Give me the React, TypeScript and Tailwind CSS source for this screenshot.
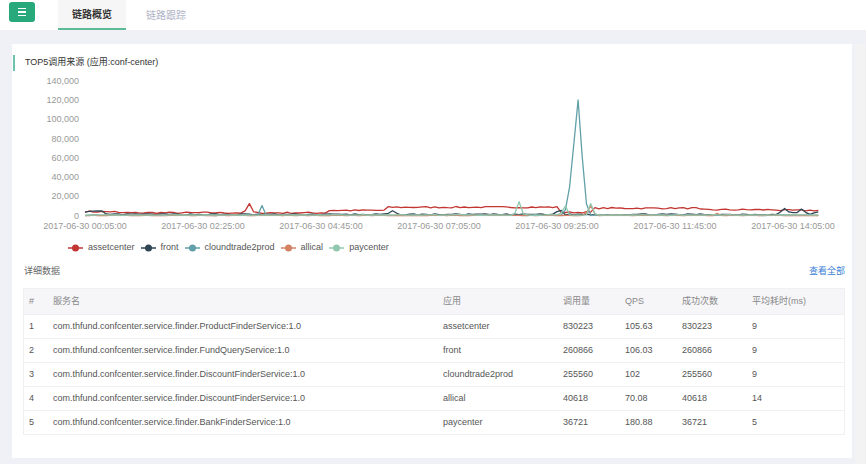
import React from 'react'

const N = 175
const X0 = 85
const STEP = 118 / 28
const px = (i: number) => X0 + i * STEP
const py = (v: number) => 215.7 - (v * 135) / 140000

function rng(seed: number) {
  let s = seed
  return () => {
    s = (s * 16807) % 2147483647
    return (s - 1) / 2147483646
  }
}

function build(seed: number, base: (i: number) => number, amp: number, spikes: Record<number, number>) {
  const r = rng(seed)
  const out: number[] = []
  for (let i = 0; i < N; i++) {
    let v = base(i) + (r() - 0.5) * amp
    if (spikes[i] !== undefined) v = spikes[i]
    out.push(Math.max(0, v))
  }
  return out
}

const series = [
  {
    name: 'assetcenter',
    color: '#c23531',
    data: build(
      7,
      (i) =>
        i < 8 ? 4200 : i < 58 ? 3000 : i < 72 ? 5500 : i < 113 ? 8800 : i < 121 ? 3500 : i < 146 ? 7800 : i < 165 ? 6200 : 5500,
      1500,
      { 38: 5000, 39: 12500, 40: 4000 }
    ),
  },
  {
    name: 'front',
    color: '#2f4554',
    data: build(
      13,
      (i) => (i < 5 ? 4300 : i > 164 ? 3500 : 1300),
      1400,
      { 72: 2500, 73: 5200, 74: 2500, 112: 4200, 113: 5500, 166: 7500, 170: 6800, 172: 1500 }
    ),
  },
  {
    name: 'cloundtrade2prod',
    color: '#61a0a8',
    data: build(21, () => 500, 500, {
      41: 500,
      42: 10500,
      43: 500,
      114: 6000,
      115: 30000,
      116: 75000,
      117: 120000,
      118: 60000,
      119: 12000,
    }),
  },
  {
    name: 'allical',
    color: '#d48265',
    data: build(33, () => 300, 400, { 119: 3000, 120: 10500, 121: 2000, 150: 2500 }),
  },
  {
    name: 'paycenter',
    color: '#91c7ae',
    data: build(45, () => 700, 600, { 102: 2500, 103: 14500, 104: 2000, 113: 3000, 114: 10000, 120: 12500, 121: 2000 }),
  },
]

const yTicks = [0, 20000, 40000, 60000, 80000, 100000, 120000, 140000]
const xLabels = [
  '2017-06-30 00:05:00',
  '2017-06-30 02:25:00',
  '2017-06-30 04:45:00',
  '2017-06-30 07:05:00',
  '2017-06-30 09:25:00',
  '2017-06-30 11:45:00',
  '2017-06-30 14:05:00',
]

const rows = [
  ['1', 'com.thfund.confcenter.service.finder.ProductFinderService:1.0', 'assetcenter', '830223', '105.63', '830223', '9'],
  ['2', 'com.thfund.confcenter.service.finder.FundQueryService:1.0', 'front', '260866', '106.03', '260866', '9'],
  ['3', 'com.thfund.confcenter.service.finder.DiscountFinderService:1.0', 'cloundtrade2prod', '255560', '102', '255560', '9'],
  ['4', 'com.thfund.confcenter.service.finder.DiscountFinderService:1.0', 'allical', '40618', '70.08', '40618', '14'],
  ['5', 'com.thfund.confcenter.service.finder.BankFinderService:1.0', 'paycenter', '36721', '180.88', '36721', '5'],
]

const cols = 'grid grid-cols-[24px_390px_120px_62px_57px_70px_1fr]'

function Chart() {
  return (
    <svg width="840" height="165" viewBox="12 71 840 165" className="block">
      {yTicks.map((t) => (
        <text key={t} x="79" y={py(t) + 3} textAnchor="end" fontSize="9" fill="#999">
          {t.toLocaleString('en-US')}
        </text>
      ))}
      <line x1={X0} x2="818" y1="215.7" y2="215.7" stroke="#ddd" strokeWidth="1" />
      {xLabels.map((l, k) => (
        <text key={l} x={X0 + k * 118} y="229" textAnchor="middle" fontSize="9" fill="#999">
          {l}
        </text>
      ))}
      {series.map((s) => (
        <polyline
          key={s.name}
          fill="none"
          stroke={s.color}
          strokeWidth="1.3"
          strokeLinejoin="round"
          points={s.data.map((v, i) => `${px(i).toFixed(1)},${py(v).toFixed(1)}`).join(' ')}
        />
      ))}
    </svg>
  )
}

export default function App() {
  return (
    <div className="w-[866px] h-[464px] overflow-hidden bg-[#f0f0f7] font-['Liberation_Sans','Noto_Sans_CJK_SC',sans-serif]">
      {/* top bar */}
      <header className="h-[30px] bg-white flex items-stretch">
        <div className="pl-[9px] pt-[2px]">
          <button className="w-[26px] h-[20px] rounded-[3px] bg-[#27a97b] flex flex-col items-center justify-center gap-[2px]">
            <span className="block w-[8px] h-[1.5px] bg-white" />
            <span className="block w-[8px] h-[1.5px] bg-white" />
            <span className="block w-[8px] h-[1.5px] bg-white" />
          </button>
        </div>
        <div className="ml-[23px] w-[68px] bg-[#f6f6f6] border-b-2 border-[#5dbb95] flex items-center justify-center text-[10px] font-bold text-[#333]">
          链路概览
        </div>
        <div className="ml-[20px] flex items-center text-[10px] text-[#b0b3c6]">链路跟踪</div>
      </header>

      <div className="flex">
        <main className="ml-[12px] mt-[14px] w-[840px] h-[414px] bg-white">
          <div className="mt-[11px] ml-px h-[16px] border-l-2 border-[#6cc3b0] pl-[10px] flex items-center text-[9px] text-[#333]">
            TOP5调用来源 (应用:conf-center)
          </div>

          <Chart />

          {/* legend */}
          <div className="h-[24px] pl-[56px] flex items-center gap-[6px] text-[9px] text-[#555]">
            {series.map((s) => (
              <div key={s.name} className="flex items-center gap-[5px]">
                <svg width="15" height="8" viewBox="0 0 15 8">
                  <line x1="0" x2="15" y1="4" y2="4" stroke={s.color} strokeWidth="1.5" />
                  <circle cx="7.5" cy="4" r="3.5" fill={s.color} />
                </svg>
                <span>{s.name}</span>
              </div>
            ))}
          </div>

          <div className="h-[24px] pl-[12px] pr-[7px] flex items-center justify-between text-[9px]">
            <span className="text-[#666]">详细数据</span>
            <span className="text-[#3b7fd6]">查看全部</span>
          </div>

          {/* table */}
          <div className="mt-[4px] ml-[11px] mr-[7px] border border-[#f0f0f3] text-[9px]">
            <div className={`${cols} h-[25px] items-center bg-[#f6f6f9] text-[#888]`}>
              {['#', '服务名', '应用', '调用量', 'QPS', '成功次数', '平均耗时(ms)'].map((h) => (
                <div key={h} className="pl-[5px]">
                  {h}
                </div>
              ))}
            </div>
            {rows.map((r) => (
              <div key={r[0]} className={`${cols} h-[24px] items-center border-t border-[#f0f0f3] text-[#555]`}>
                {r.map((c, k) => (
                  <div key={k} className="pl-[5px] whitespace-nowrap">
                    {c}
                  </div>
                ))}
              </div>
            ))}
          </div>
        </main>
        <div className="ml-[3px] mt-[14px] w-[11px] h-[450px] bg-[#f3f3f3]" />
      </div>
    </div>
  )
}
